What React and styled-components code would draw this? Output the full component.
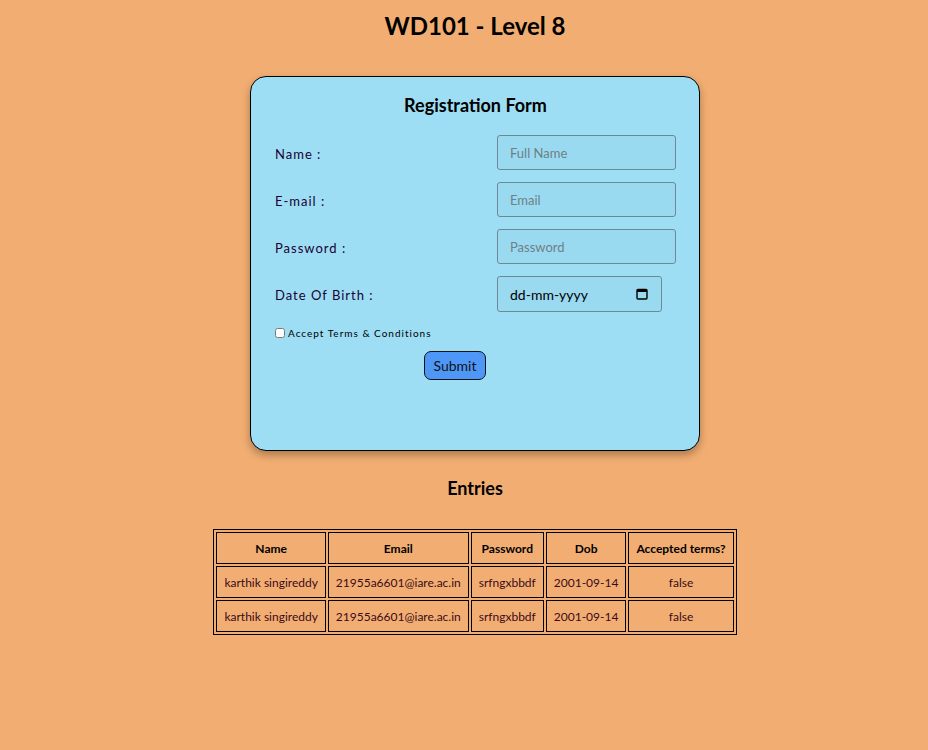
import React from 'react'
import styled, { createGlobalStyle } from 'styled-components'

const GlobalStyle = createGlobalStyle`
  html, body {
    margin: 0;
    padding: 0;
    background: #f2ae72;
    font-family: Lato, "Liberation Sans", sans-serif;
    color: #000;
  }
`

const Page = styled.div`
  min-height: 750px;
  display: flex;
  flex-direction: column;
  align-items: center;
  padding: 12px 0 0 22px;
  box-sizing: border-box;
`

const Title = styled.h1`
  margin: 0;
  font-size: 24px;
  line-height: 28px;
  font-weight: 700;
`

const FormCard = styled.form`
  margin-top: 36px;
  width: 450px;
  height: 375px;
  box-sizing: border-box;
  background: #9ddef4;
  border: 1px solid #000;
  border-radius: 16px;
  box-shadow: 0 4px 8px rgba(0, 0, 0, 0.3);
  padding: 17px 23px 0 24px;
  display: flex;
  flex-direction: column;
`

const FormTitle = styled.h2`
  margin: 0 0 19px;
  text-align: center;
  font-size: 18px;
  line-height: 22px;
  font-weight: 700;
`

const Fields = styled.div`
  display: grid;
  grid-template-columns: 222px 179px;
  row-gap: 12px;
  align-items: center;
`

const Label = styled.label`
  font-size: 13px;
  letter-spacing: 1px;
  color: #1a0033;
  padding-top: 2px;
`

const Input = styled.input`
  box-sizing: border-box;
  width: 179px;
  height: 35px;
  background: #9adaf0;
  border: 1px solid #6b8a96;
  border-radius: 3px;
  padding: 0 12px;
  font-family: Lato, "Liberation Sans", sans-serif;
  font-size: 13px;
  color: #000;

  &::placeholder {
    color: ${p => (p.$dark ? '#000' : '#6f7f86')};
  }
`

const DateBox = styled.div`
  position: relative;
  width: 165px;

  ${Input} {
    width: 165px;
    height: 36px;
    font-size: 14px;
  }
`

const CalendarIcon = styled.svg`
  position: absolute;
  right: 14px;
  top: 12px;
  width: 12px;
  height: 12px;
  pointer-events: none;
`

const TermsRow = styled.div`
  margin-top: 15px;
  display: flex;
  align-items: center;
  gap: 3px;
  font-size: 10px;
  letter-spacing: 1px;
`

const Check = styled.input`
  margin: 0;
  width: 10px;
  height: 10px;
`

const SubmitButton = styled.button`
  align-self: flex-start;
  margin: 12px 0 0 149px;
  width: 62px;
  height: 29px;
  background: #4e97f7;
  border: 1px solid #111;
  border-radius: 7px;
  font-family: Lato, "Liberation Sans", sans-serif;
  font-size: 14px;
  font-weight: 400;
  color: #111;
  padding: 0;
`

const EntriesTitle = styled.h2`
  margin: 26px 0 0;
  font-size: 18px;
  line-height: 22px;
  font-weight: 700;
`

const Table = styled.table`
  margin-top: 30px;
  border: 1px solid #000;
  border-spacing: 2px;
  font-size: 12px;
`

const Th = styled.th`
  border: 1px solid #000;
  height: 30px;
  padding: 0 7px;
  font-weight: 700;
`

const Td = styled.td`
  border: 1px solid #000;
  height: 30px;
  padding: 0 7px;
  text-align: center;
  color: #3a0a1a;
`

const fields = [
  { label: 'Name :', type: 'text', placeholder: 'Full Name' },
  { label: 'E-mail :', type: 'email', placeholder: 'Email' },
  { label: 'Password :', type: 'password', placeholder: 'Password' },
]

const entries = [
  ['karthik singireddy', '21955a6601@iare.ac.in', 'srfngxbbdf', '2001-09-14', 'false'],
  ['karthik singireddy', '21955a6601@iare.ac.in', 'srfngxbbdf', '2001-09-14', 'false'],
]

const App = () => (
  <Page>
    <GlobalStyle />
    <Title>WD101 - Level 8</Title>
    <FormCard onSubmit={e => e.preventDefault()}>
      <FormTitle>Registration Form</FormTitle>
      <Fields>
        {fields.map(f => (
          <React.Fragment key={f.label}>
            <Label>{f.label}</Label>
            <Input type={f.type} placeholder={f.placeholder} />
          </React.Fragment>
        ))}
        <Label>Date Of Birth :</Label>
        <DateBox>
          <Input type="text" placeholder="dd-mm-yyyy" $dark />
          <CalendarIcon viewBox="0 0 12 12">
            <rect x="1" y="1.5" width="10" height="9.5" rx="1" fill="none" stroke="#000" strokeWidth="1.4" />
            <rect x="1" y="1.5" width="10" height="2.5" fill="#000" />
          </CalendarIcon>
        </DateBox>
      </Fields>
      <TermsRow>
        <Check type="checkbox" />
        <span>Accept Terms &amp; Conditions</span>
      </TermsRow>
      <SubmitButton type="submit">Submit</SubmitButton>
    </FormCard>
    <EntriesTitle>Entries</EntriesTitle>
    <Table>
      <thead>
        <tr>
          <Th>Name</Th>
          <Th>Email</Th>
          <Th>Password</Th>
          <Th>Dob</Th>
          <Th>Accepted terms?</Th>
        </tr>
      </thead>
      <tbody>
        {entries.map((row, i) => (
          <tr key={i}>
            {row.map((c, j) => (
              <Td key={j}>{c}</Td>
            ))}
          </tr>
        ))}
      </tbody>
    </Table>
  </Page>
)

export default App
